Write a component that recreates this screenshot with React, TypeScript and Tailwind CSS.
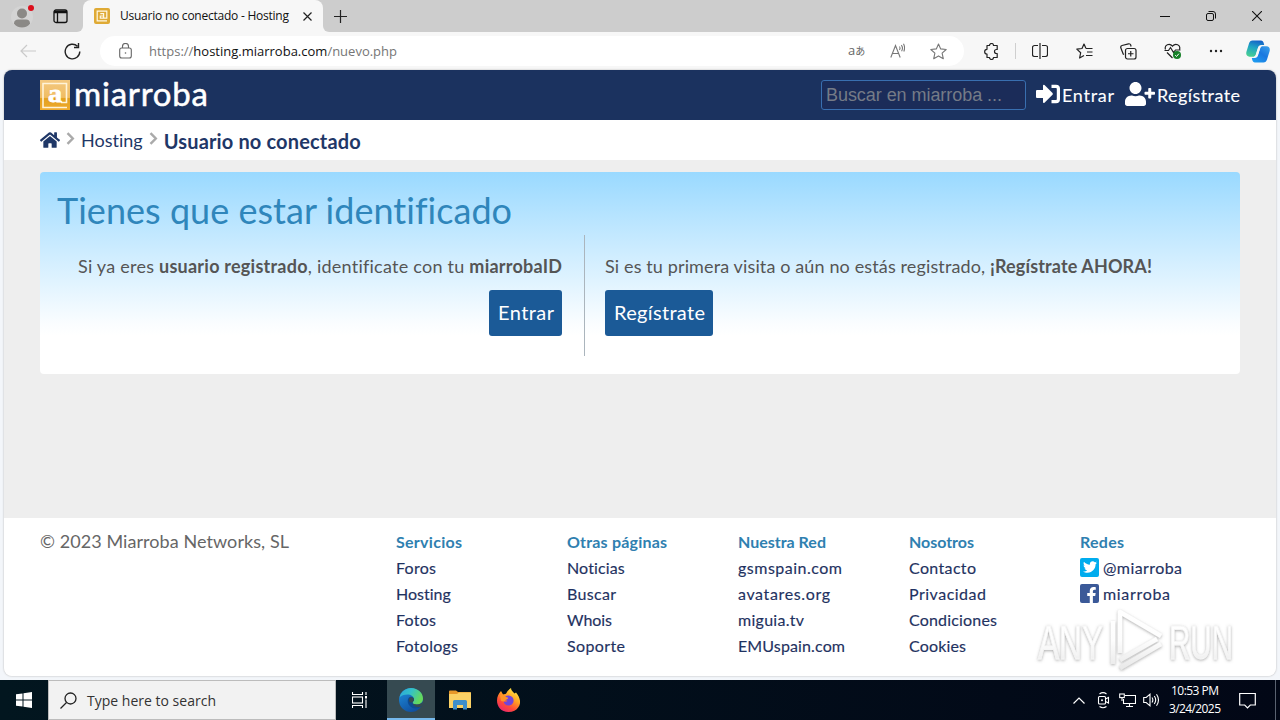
import { useLayoutEffect, useRef, type ReactNode } from "react";
import { FaFacebookF, FaHome, FaTwitter, FaUserPlus } from "react-icons/fa";

/** One line of text, tracked so that it fills exactly `w` pixels. */
function Fit({ w, className = "", children }: { w: number; className?: string; children: ReactNode }) {
  const ref = useRef<HTMLSpanElement>(null);
  useLayoutEffect(() => {
    const el = ref.current;
    if (!el) return;
    el.style.letterSpacing = "0px";
    const count = Math.max(1, (el.textContent ?? "").length - 1);
    const natural = el.getBoundingClientRect().width;
    const spacing = (w - natural) / count;
    el.style.letterSpacing = `${spacing}px`;
    el.style.marginRight = `${-spacing}px`;
  }, [w]);
  return (
    <span ref={ref} className={`inline-block shrink-0 whitespace-nowrap ${className}`}>
      {children}
    </span>
  );
}

function TabStrip() {
  return (
    <div className="flex h-8 items-stretch bg-[#f7f7f7]">
      <div className="flex w-[83px] items-center rounded-br-md bg-[#cdcdcd] pl-[11px]">
        <svg width="26" height="28" viewBox="0 0 26 28">
          <circle cx="11" cy="15" r="11" fill="#d4d4d4" />
          <circle cx="11" cy="11.500" r="5" fill="#8b8986" />
          <path d="M3 21.500c0-3 2-4 4-4h8c2.500 0 4 1.500 4 4-1.500 2.800-4.500 4-8 4s-6.500-1.200-8-4z" fill="#8b8986" />
          <circle cx="20" cy="6" r="3" fill="#dc0f1c" />
        </svg>
        <svg className="ml-4" width="15" height="15" viewBox="0 0 15 15" fill="none" stroke="#111" strokeWidth="1.300">
          <rect x="1" y="1" width="13" height="12.500" rx="2" />
          <path d="M1 2.500h13M1 3.500h13M4.500 4v9.500" />
        </svg>
      </div>
      <div className="bg-[#cdcdcd]">
        <div className="flex h-8 w-60 items-center rounded-t-lg bg-[#f7f7f7] pl-[11px]">
          <svg width="16" height="16" viewBox="0 0 16 16">
            <rect width="16" height="16" rx="2" fill="#dfaa35" />
            <path d="M13 12.800H3.200V3.200h9.600v7H6.300V8h3.200M6.300 5.700h3.300v4.500" fill="none" stroke="#fff8e4" strokeWidth="1.200" />
          </svg>
          <Fit w={169} className="ml-[10px] text-[12px] leading-4 text-[#111]">
            Usuario no conectado - Hosting
          </Fit>
          <svg className="ml-[14px]" width="9" height="9" viewBox="0 0 9 9" stroke="#222" strokeWidth="1.200">
            <path d="M.5.5l8 8M8.500.5l-8 8" />
          </svg>
        </div>
      </div>
      <div className="flex flex-1 items-center rounded-bl-md bg-[#cdcdcd] pl-[11px]">
        <svg width="13" height="13" viewBox="0 0 13 13" stroke="#222" strokeWidth="1.200">
          <path d="M6.500 0v13M0 6.500h13" />
        </svg>
      </div>
      <div className="flex items-center gap-9 bg-[#cdcdcd] pr-[18px]">
        <svg width="10" height="10" viewBox="0 0 10 10" stroke="#111">
          <path d="M0 5.500h10" />
        </svg>
        <svg width="10" height="10" viewBox="0 0 10 10" fill="none" stroke="#111">
          <rect x=".5" y="2.500" width="7" height="7" rx="1.500" />
          <path d="M2.500.5h4.500a2.500 2.500 0 0 1 2.500 2.500v4.500" />
        </svg>
        <svg width="10" height="10" viewBox="0 0 10 10" stroke="#111" strokeWidth="1.100">
          <path d="M0 0l10 10M10 0L0 10" />
        </svg>
      </div>
    </div>
  );
}

function Toolbar() {
  return (
    <div className="flex h-[38px] items-center bg-[#f7f7f7]">
      <svg className="ml-5" width="16" height="14" viewBox="0 0 16 14" fill="none" stroke="#cacaca" strokeWidth="1.200">
        <path d="M16 7H1M7 1L1 7l6 6" />
      </svg>
      <svg className="ml-7" width="17" height="17" viewBox="0 0 17 17" fill="none" stroke="#222" strokeWidth="1.400">
        <path d="M15.800 8.500A7.300 7.300 0 1 1 13.500 3.200M14.500 0v4.500H10" />
      </svg>
      <div className="ml-[19px] flex h-[30px] w-[864px] items-center rounded-full bg-white pl-[19px]">
        <svg width="13" height="16" viewBox="0 0 13 16" fill="none" stroke="#666" strokeWidth="1.100">
          <rect x=".7" y="5" width="11.600" height="10" rx="2" />
          <path d="M3.500 5V3.500a3 3 0 0 1 6 0V5" />
          <circle cx="6.500" cy="10" r=".8" fill="#666" stroke="none" />
        </svg>
        <Fit w={248} className="ml-[17px] text-[13px] leading-5 text-[#767676]">
          https://<span className="text-[#111]">hosting.miarroba.com</span>/nuevo.php
        </Fit>
        <div className="flex-1" />
        <div className="mr-[25px] mb-[2px] flex w-[17px] items-baseline leading-4 text-[#666]">
          <span className="text-[13px]">a</span>
          <span className="text-[10px]">あ</span>
        </div>
        <svg className="mr-[23px]" width="17" height="16" viewBox="0 0 17 16" fill="none" stroke="#777" strokeWidth="1.100">
          <path d="M.8 14.500L5.500 2.500l4.700 12M2.500 10.500h6M9.500 3.500q1.200 1.500 0 3.500M11.300 2.200q2.200 2.600.3 6M13.500.8q2 3.500.3 7.700" />
        </svg>
        <svg className="mr-[17px]" width="17" height="17" viewBox="0 0 17 17" fill="none" stroke="#777" strokeWidth="1.100" strokeLinejoin="round">
          <path d="M8.500 1l2.200 4.900 5.500.6-4.100 3.700 1.200 5.500-4.800-2.800-4.800 2.800 1.200-5.500L.8 6.500l5.500-.6z" />
        </svg>
      </div>
      <svg className="ml-[19px]" width="16" height="17" viewBox="0 0 16 17" fill="none" stroke="#222" strokeWidth="1.200" strokeLinejoin="round">
        <path d="M4 2.500h2.500a2 2 0 0 1 4 0h3.700v4h-.7a2 2 0 0 0 0 4h.7v4h-3.700a2 2 0 0 1-4 0H4v-3.500a2.300 2.300 0 0 1 0-4.700z" />
      </svg>
      <div className="ml-4 h-4 w-px bg-[#cfcfcf]" />
      <svg className="ml-4" width="16" height="16" viewBox="0 0 16 16" fill="none" stroke="#222" strokeWidth="1.200">
        <path d="M6 2.500H2.500a2 2 0 0 0-2 2v7a2 2 0 0 0 2 2H6M10 2.500h3.500a2 2 0 0 1 2 2v7a2 2 0 0 1-2 2H10M8 0v16" />
      </svg>
      <svg className="ml-7" width="17" height="16" viewBox="0 0 17 16" fill="none" stroke="#222" strokeWidth="1.200" strokeLinejoin="round">
        <path d="M10 5.500L8 1 6 5.500l-5.200.6 3.900 3.600-1.100 5.300L8 12.500M10 5.500h6.500M11 9h5.500M10 12.500h6.500" />
      </svg>
      <svg className="ml-[27px]" width="17" height="17" viewBox="0 0 17 17" fill="none" stroke="#222" strokeWidth="1.200">
        <rect x="5.500" y="5.500" width="10.500" height="10.500" rx="2" />
        <path d="M10.750 8v5.500M8 10.750h5.500M4 11.500l-.8-.5L.8 4.800C.5 3.700 1 2.800 2 2.500L8.500.8c1-.2 1.900.3 2.200 1.200l.4 1.500" />
      </svg>
      <svg className="ml-[27px]" width="18" height="17" viewBox="0 0 18 17" fill="none" stroke="#222" strokeWidth="1.200">
        <path d="M1.500 6.500C0 2 5.500-.5 8.500 3.200 11.500-.5 17 2 15.500 6.500M3 9.500l5.500 5.500M.5 7.500h4l2-3 3 5 2-2.500h5" />
        <circle cx="13" cy="12" r="4" fill="#168028" stroke="none" />
        <path d="M11.200 12.200l1.300 1.300 2.400-2.800" stroke="#fff" strokeWidth="1" />
      </svg>
      <svg className="ml-[27px]" width="14" height="4" viewBox="0 0 14 4" fill="#222">
        <circle cx="2" cy="2" r="1.200" />
        <circle cx="7" cy="2" r="1.200" />
        <circle cx="12" cy="2" r="1.200" />
      </svg>
      <svg className="ml-[23px]" width="24" height="23" viewBox="0 0 24 23">
        <defs>
          <linearGradient id="cpA" x1=".6" y1="0" x2=".3" y2="1">
            <stop offset="0" stopColor="#1463c8" />
            <stop offset=".45" stopColor="#1fa5c4" />
            <stop offset="1" stopColor="#48cf92" />
          </linearGradient>
          <linearGradient id="cpB" x1="1" y1="0" x2=".2" y2="1">
            <stop offset="0" stopColor="#3ba2ea" />
            <stop offset=".5" stopColor="#1a78e0" />
            <stop offset="1" stopColor="#1f9cf0" />
          </linearGradient>
        </defs>
        <path d="M6.500.5h8.500c1.500 0 2.300 1 2.700 2.500l.5 2h-3c-1.700 0-2.700 1-3.200 2.700L9.700 15c-.5 1.400-1.300 1.700-2.700 1.700H3.500c-3 0-3.800-2.500-3-5.200L3 3.500C3.600 1.700 4.700.5 6.500.5z" fill="url(#cpA)" />
        <path d="M17.500 22.500H9c-1.500 0-2.300-1-2.700-2.500l-.5-2h3c1.700 0 2.700-1 3.200-2.700L14.300 8c.5-1.400 1.300-1.700 2.700-1.700h3.500c3 0 3.800 2.500 3 5.200l-2.500 8c-.6 1.800-1.700 3-3.500 3z" fill="url(#cpB)" />
        <path d="M11.800 8.500c.5-1.500 1.200-2.500 3-2.500h1.500c-1.300.2-1.800 1-2.200 2.200l-2 6.300c-.5 1.500-1.200 2.500-3 2.500H7.500c1.300-.2 1.900-.9 2.300-2.200z" fill="#f7f7f7" />
      </svg>
    </div>
  );
}

function SiteHeader() {
  return (
    <header className="flex h-[50px] items-center bg-[#1b325f] pr-9 pl-9 text-white">
      <svg width="30" height="30" viewBox="0 0 30 30">
        <defs>
          <linearGradient id="lg" x1="0" y1="0" x2="0" y2="1">
            <stop offset="0" stopColor="#f3c880" />
            <stop offset=".58" stopColor="#f0bd63" />
            <stop offset=".62" stopColor="#e2a01e" />
            <stop offset="1" stopColor="#efab2d" />
          </linearGradient>
        </defs>
        <rect width="30" height="30" fill="url(#lg)" />
        <path d="M27 27.500H3V3.500h23.500V22.500H21" fill="none" stroke="#fff3d8" strokeWidth="1.600" />
        <text x="8" y="22" fontSize="25" fontWeight="700" fill="#fff" stroke="#fff" strokeWidth=".8" fontFamily="Liberation Serif, serif" textLength="14" lengthAdjust="spacingAndGlyphs">a</text>
      </svg>
      <Fit w={134} className="mt-[-4px] ml-1 text-[33px] leading-[50px] [-webkit-text-stroke:0.5px_white]">miarroba</Fit>
      <div className="flex-1" />
      <div className="flex h-[30px] w-[205px] items-center rounded-[3px] border border-[#396fb0] bg-[#1b2c59] pl-1">
        <Fit w={176} className="font-['Liberation_Sans',sans-serif] text-[18px] leading-6 text-[#757b87]">Buscar en miarroba ...</Fit>
      </div>
      <svg className="ml-[10px] -mt-[2px]" width="24" height="20" viewBox="0 0 24 20" fill="#fff">
        <path d="M0 7q0-1 1-1h6V1.500Q7.300.3 8.500 1l8 8q.8.900 0 1.800l-8 8Q7.300 19.500 7 18.300V14H1q-1 0-1-1z" />
        <path d="M15.500.8H20a4 4 0 0 1 4 4v10.400a4 4 0 0 1-4 4h-4.500v-3.200H20q.8 0 .8-.8V4.800Q20.800 4 20 4h-4.500z" />
      </svg>
      <Fit w={52} className="ml-[2px] text-[18px] leading-6 [-webkit-text-stroke:0.1px_white]">Entrar</Fit>
      <FaUserPlus className="ml-[11px] -mt-[2px] h-6 w-[30px]" />
      <Fit w={83} className="ml-[2px] text-[18px] leading-6 [-webkit-text-stroke:0.1px_white]">Regístrate</Fit>
    </header>
  );
}

function Crumb() {
  return (
    <svg className="mt-[-3px] ml-[6px]" width="9" height="13" viewBox="0 0 9 13" fill="none" stroke="#aaa" strokeWidth="2.400">
      <path d="M1.500 1.200l5.300 5.300-5.300 5.300" />
    </svg>
  );
}

function Breadcrumb() {
  return (
    <nav className="flex h-10 items-center bg-white pl-9 text-[#1f3767]">
      <FaHome className="h-5 w-5" />
      <Crumb />
      <Fit w={62} className="ml-[6px] text-[18px] leading-6">Hosting</Fit>
      <Crumb />
      <Fit w={197} className="mt-[1px] ml-[6px] text-[20px] leading-6 font-bold">Usuario no conectado</Fit>
    </nav>
  );
}

function LoginPanel() {
  return (
    <section className="mx-9 mt-3 h-[202px] rounded bg-linear-to-b from-[#99d9ff] via-[#fafdff] via-[75%] to-white to-[81%] px-4 pt-[18px] text-[18px] text-[#555]">
      <h1 className="h-10 pl-px text-[36px] leading-10 text-[#2f86bb]">
        <Fit w={455}>Tienes que estar identificado</Fit>
      </h1>
      <div className="mt-[5px] flex h-[121px]">
        <div className="flex w-[529px] flex-col items-end border-r border-[#abb5bd] pt-[19px] pr-[22px]">
          <Fit w={484} className="leading-6">
            Si ya eres <b>usuario registrado</b>, identificate con tu <b>miarrobaID</b>
          </Fit>
          <button className="mt-3 flex h-[46px] w-[73px] items-center rounded-[3px] bg-[#1b5a97] pb-[2px] pl-[9px] text-white">
            <Fit w={56} className="text-[20px] leading-7">Entrar</Fit>
          </button>
        </div>
        <div className="flex flex-col items-start pt-[19px] pl-5">
          <Fit w={547} className="leading-6">
            Si es tu primera visita o aún no estás registrado, <b>¡Regístrate AHORA!</b>
          </Fit>
          <button className="mt-3 flex h-[46px] w-[108px] items-center rounded-[3px] bg-[#1b5a97] pb-[2px] pl-[9px] text-white">
            <Fit w={91} className="text-[20px] leading-7">Regístrate</Fit>
          </button>
        </div>
      </div>
    </section>
  );
}

type Column = { title: string; w: number; links: [string, number][] };

const columns: Column[] = [
  { title: "Servicios", w: 66, links: [["Foros", 40], ["Hosting", 55], ["Fotos", 40], ["Fotologs", 62]] },
  { title: "Otras páginas", w: 100, links: [["Noticias", 58], ["Buscar", 49], ["Whois", 45], ["Soporte", 58]] },
  { title: "Nuestra Red", w: 88, links: [["gsmspain.com", 104], ["avatares.org", 92], ["miguia.tv", 66], ["EMUspain.com", 107]] },
  { title: "Nosotros", w: 65, links: [["Contacto", 67], ["Privacidad", 77], ["Condiciones", 88], ["Cookies", 57]] },
];

function Watermark() {
  return (
    <svg className="absolute top-[536px] left-[1024px]" width="240" height="70" viewBox="-8 0 240 70">
      <defs>
        <filter id="soft" x="-10%" y="-20%" width="120%" height="140%">
          <feDropShadow dx="0" dy="1" stdDeviation="1.700" floodColor="#777" floodOpacity=".6" />
        </filter>
        <linearGradient id="wm" x1="0" y1="0" x2="0" y2="1">
          <stop offset="0" stopColor="#fff" />
          <stop offset=".5" stopColor="#fdfdfd" />
          <stop offset="1" stopColor="#e9e9e9" />
        </linearGradient>
      </defs>
      <g filter="url(#soft)" fill="url(#wm)" stroke="#f6f6f6" strokeWidth=".8" fontFamily="Liberation Sans, sans-serif" fontSize="49">
        <text x="2" y="53" textLength="65" lengthAdjust="spacingAndGlyphs">ANY</text>
        <text x="133" y="53" textLength="64" lengthAdjust="spacingAndGlyphs">RUN</text>
        <g fill="none" stroke="url(#wm)" strokeWidth="4.500" strokeLinejoin="round">
          <path d="M84 47V6l41 24M77 15v43M84 54l37-21M84 62l41-24" />
        </g>
      </g>
    </svg>
  );
}

function SiteFooter() {
  return (
    <footer className="flex h-[158px] bg-white pt-[11px] pl-9 text-[16px] text-[#1f3261]">
      <div className="w-[356px] text-[18px] leading-6 text-[#666]">
        <Fit w={249}>© 2023 Miarroba Networks, SL</Fit>
      </div>
      {columns.map((c) => (
        <div key={c.title} className="flex w-[171px] flex-col items-start leading-[26px]">
          <Fit w={c.w} className="font-bold text-[#2f80b0]">{c.title}</Fit>
          {c.links.map(([label, w]) => (
            <Fit key={label} w={w} className="[-webkit-text-stroke:0.15px_#1f3261]">{label}</Fit>
          ))}
        </div>
      ))}
      <div className="flex flex-col items-start leading-[26px]">
        <Fit w={44} className="font-bold text-[#2f80b0]">Redes</Fit>
        <div className="flex items-center">
          <span className="-mt-[2px] flex h-[19px] w-[19px] items-center justify-center rounded-[2px] bg-[#00acee] text-white">
            <FaTwitter className="h-[14px] w-[14px]" />
          </span>
          <Fit w={79} className="ml-1 [-webkit-text-stroke:0.15px_#1f3261]">@miarroba</Fit>
        </div>
        <div className="flex items-center">
          <span className="-mt-[2px] flex h-[19px] w-[19px] items-end justify-end rounded-[2px] bg-[#3b5998] pr-[1px] text-white">
            <FaFacebookF className="h-4 w-[13px]" />
          </span>
          <Fit w={67} className="ml-1 [-webkit-text-stroke:0.15px_#1f3261]">miarroba</Fit>
        </div>
      </div>
    </footer>
  );
}

function Taskbar() {
  return (
    <div className="flex h-10 items-stretch bg-linear-to-r from-[#02161f] to-[#020716] text-white">
      <div className="flex w-12 items-center pl-4">
        <svg width="16" height="16" viewBox="0 0 16 16" fill="#fff">
          <path d="M0 2.300l6.500-.9v6.100H0zM7.500 1.200L16 0v7.500H7.500zM0 8.500h6.500v6.100L0 13.700zM7.500 8.500H16V16l-8.500-1.200z" />
        </svg>
      </div>
      <div className="flex w-72 items-center border border-[#bcbcbc] bg-[#f2f2f2] pl-[11px]">
        <svg width="17" height="17" viewBox="0 0 17 17" fill="none" stroke="#222" strokeWidth="1.300">
          <circle cx="10.500" cy="6.500" r="5.500" />
          <path d="M6.500 10.500L.5 16.500" />
        </svg>
        <Fit w={129} className="mt-[1px] ml-[10px] text-[14px] leading-5 text-[#333]">Type here to search</Fit>
      </div>
      <div className="flex w-[51px] items-center pl-4">
        <svg width="16" height="16" viewBox="0 0 16 16" fill="none" stroke="#fff" strokeWidth="1.100">
          <path d="M.5 0v2.500h10V0M.5 16v-2.500h10V16M14 0v3M14 7.500V16" />
          <rect x=".5" y="5" width="10" height="6" />
          <rect x="13" y="4" width="2" height="2.500" fill="#fff" stroke="none" />
        </svg>
      </div>
      <div className="flex w-12 items-center justify-center border-b-2 border-[#76b9ed] bg-[#364a51] pt-[2px]">
        <svg width="24" height="24" viewBox="0 0 24 24">
          <defs>
            <linearGradient id="eg1" x1="0" y1="0" x2="1" y2=".4">
              <stop offset="0" stopColor="#2ba5dc" />
              <stop offset=".5" stopColor="#34c1c8" />
              <stop offset="1" stopColor="#65d95b" />
            </linearGradient>
            <linearGradient id="eg2" x1="0" y1="0" x2=".6" y2="1">
              <stop offset="0" stopColor="#1f8fdd" />
              <stop offset="1" stopColor="#104f9f" />
            </linearGradient>
          </defs>
          <circle cx="12" cy="12" r="12" fill="url(#eg2)" />
          <path d="M.5 9.500C2 3.500 6.800 0 12 0c7 0 12 5.200 12 10.500 0 4-3 6-6.200 6-2.500 0-4.300-.8-4.300-2 0-.8 1.500-1.300 1.500-3C15 8.500 12 6.500 8.500 6.500 5 6.500 2 7.800.5 9.500z" fill="url(#eg1)" />
          <path d="M10 9.500c-3.500 4 .5 11 6.500 11 2.300 0 4.300-.7 5.800-2.200 .5-.5.200-1.300-.8-1-4 1.600-8 .3-8-2.800 0-.8 1.500-1.300 1.500-3 0-2.200-3-4-5-2z" fill="#0d4a92" />
          <path d="M13.500 14.500c0-.8 1.500-1.300 1.500-3-.2-1.700-2.500-3-4.500-1.500-1.500 2.500 0 5 3 4.500z" fill="#364a51" />
          <path d="M13.500 14.500c0 1.200 1.800 2 4.300 2 2.400 0 5-.8 6-2.700 0 3-1 4.300-2 5-4 1.300-8.200-1-8.300-4.300z" fill="#364a51" />
        </svg>
      </div>
      <div className="flex w-12 items-center justify-center pl-[1px]">
        <svg width="22" height="20" viewBox="0 0 22 20">
          <path d="M0 1.500Q0 .5 1 .5h6l2 1.500h12q1 0 1 1V18H0z" fill="#e7982a" />
          <path d="M0 4h8l2-1.500h12V18H0z" fill="#fbd165" />
          <path d="M4 11.500q0-1.500 1.500-1.500h11q1.500 0 1.500 1.500v8h-4V15H8v4.500H4z" fill="#3f8fcb" />
        </svg>
      </div>
      <div className="flex w-12 items-center justify-center pl-[2px]">
        <svg width="23" height="24" viewBox="0 0 23 24">
          <defs>
            <linearGradient id="fx" x1=".8" y1="0" x2=".2" y2="1">
              <stop offset="0" stopColor="#fff04a" />
              <stop offset=".4" stopColor="#ffa022" />
              <stop offset=".7" stopColor="#ff4a38" />
              <stop offset="1" stopColor="#e92273" />
            </linearGradient>
          </defs>
          <path d="M4 3l2 3.500 3-.7c1-2.300 2.500-4 5-5.800 0 2.500 2 3.500 3.500 5.500l1.500-1c4 5 5.500 10 2.500 14.500-2 3.500-5.500 5-10 5C4 24 0 18.500 0 12.500 0 8.500 1.700 5.500 4 3z" fill="url(#fx)" />
          <path d="M8 8.500c3-2 6.500-1 8 1.500 1.700 3.500-.5 7.500-4.500 7.500-3 0-5-2-4.800-4.300C8 14 9.500 14 10.500 13c-1-1-2.500-1-3.500-1 0-1.300 0-2.500 1-3.500z" fill="#7145d8" />
          <path d="M3 7c2.500-1 5-.2 6 2 1 .2 2.500.5 2 1.500-.7 1-2 .8-2.700 1.800-.4 1.700-2.800 1.300-4.300.4z" fill="#ff9526" />
        </svg>
      </div>
      <div className="flex-1" />
      <div className="flex items-center">
        <svg width="12" height="7" viewBox="0 0 12 7" fill="none" stroke="#fff" strokeWidth="1.200">
          <path d="M.5 6.500L6 1l5.500 5.500" />
        </svg>
        <svg className="ml-3" width="13" height="18" viewBox="0 0 13 18" fill="none" stroke="#fff" strokeWidth="1.100">
          <rect x="1.500" y="5.500" width="7" height="7.500" rx="1" />
          <path d="M8.500 8l3-1.500v5.500l-3-1.500M2.500 3q3.500-2.700 7 0M2.500 15.500q3.500 2.500 7 0" />
          <circle cx="5" cy="9.200" r="1" fill="#fff" stroke="none" />
        </svg>
        <svg className="ml-[9px]" width="17" height="16" viewBox="0 0 17 16" fill="none" stroke="#fff" strokeWidth="1.100">
          <path d="M6 3.500h10.500v8H4.500V7M10.500 11.500V14M7 14.500h7" />
          <rect x=".7" y="2" width="4.600" height="3.600" />
          <path d="M3 5.500V9" />
        </svg>
        <svg className="ml-[7px]" width="17" height="16" viewBox="0 0 17 16" fill="none" stroke="#fff" strokeWidth="1.100">
          <path d="M.7 5.500h2.500L7 2.200v11.600l-3.800-3.300H.7zM9 5.500q1.700 2.500 0 5M11.300 4q2.800 4 0 8M13.500 2.300q4 5.700 0 11.400" />
        </svg>
        <div className="ml-[8px] flex w-[54px] flex-col items-center text-[12px] leading-[18px]">
          <Fit w={48}>10:53 PM</Fit>
          <Fit w={52}>3/24/2025</Fit>
        </div>
        <svg className="ml-[17px]" width="17" height="17" viewBox="0 0 17 17" fill="none" stroke="#fff" strokeWidth="1.200">
          <path d="M.7 1.500h15.600v11.500h-5L8.500 15.800 5.700 13h-5z" />
        </svg>
        <div className="ml-[19px] h-10 w-px bg-[#5a6270]" />
        <div className="w-[4px]" />
      </div>
    </div>
  );
}

export default function App() {
  return (
    <div className="h-[720px] w-[1280px] overflow-hidden bg-[#f3f6fa] font-['Open_Sans','Noto_Sans_CJK_JP',sans-serif]">
      <TabStrip />
      <Toolbar />
      <main className="relative mx-1 mb-1 h-[606px] overflow-hidden rounded-lg bg-[#eeeeee] font-[Lato,sans-serif] shadow-[0_0_2px_#aaa]">
        <SiteHeader />
        <Breadcrumb />
        <div className="h-[358px] overflow-hidden">
          <LoginPanel />
        </div>
        <SiteFooter />
        <Watermark />
      </main>
      <Taskbar />
    </div>
  );
}
